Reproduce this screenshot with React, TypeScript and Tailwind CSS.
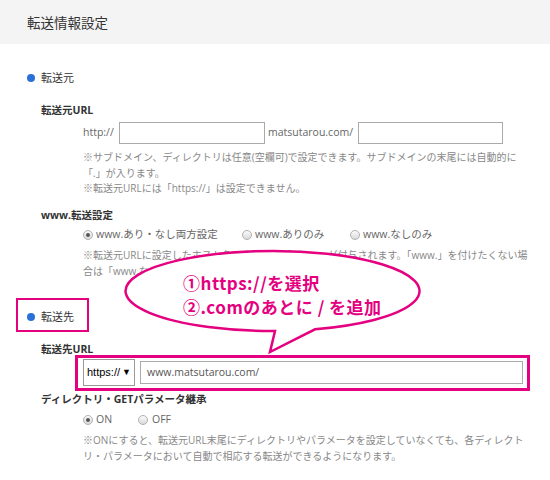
import React from 'react';

function Radio({ checked }: { checked?: boolean }) {
  return (
    <span className="inline-flex h-[10px] w-[10px] shrink-0 items-center justify-center rounded-full border border-[#b0b0b0] bg-linear-to-b from-[#fbfbfb] to-[#dadada]">
      {checked && <span className="h-[4px] w-[4px] rounded-full bg-[#555]" />}
    </span>
  );
}

function Dot() {
  return <span className="h-[8px] w-[8px] shrink-0 rounded-full bg-[#2b6fd9]" />;
}

export default function App() {
  return (
    <div className="relative h-[480px] w-[550px] overflow-hidden bg-white font-['Open_Sans','Noto_Sans_CJK_JP',sans-serif] text-[#333]">
      <div className="flex h-[44px] items-center bg-[#f4f4f4] pl-[27px] font-['Noto_Sans_CJK_JP',sans-serif] text-[13.5px]">
        転送情報設定
      </div>

      <div className="pl-[41px]">
        {/* 転送元 */}
        <div className="ml-[-14px] mt-[26px] flex h-[16px] items-center gap-[6px] text-[11px]">
          <Dot />
          転送元
        </div>

        <div className="mt-[16px] h-[16px] text-[10.5px] font-bold leading-[16px]">転送元URL</div>
        <div className="ml-[42px] mt-[4px] flex h-[22px] items-center text-[10.5px] text-[#666]">
          <span className="w-[36px]">http://</span>
          <span className="h-[22px] w-[146px] border border-[#aaa]" />
          <span className="ml-[3px] w-[90px]">matsutarou.com/</span>
          <span className="h-[22px] w-[145px] border border-[#aaa]" />
        </div>
        <div className="ml-[42px] mt-[6px] text-[10px] leading-[15.5px] text-[#888]">
          ※サブドメイン、ディレクトリは任意(空欄可)で設定できます。サブドメインの末尾には自動的に
          <br />
          「.」が入ります。
          <br />
          ※転送元URLには「https://」は設定できません。
        </div>

        <div className="mt-[10px] h-[16px] text-[10.5px] font-bold leading-[16px]">www.転送設定</div>
        <div className="ml-[42px] mt-[4px] flex h-[16px] items-center text-[10.5px] text-[#666]">
          <label className="flex w-[159px] items-center gap-[3px]">
            <Radio checked />
            www.あり・なし両方設定
          </label>
          <label className="flex w-[108px] items-center gap-[3px]">
            <Radio />
            www.ありのみ
          </label>
          <label className="flex items-center gap-[3px]">
            <Radio />
            www.なしのみ
          </label>
        </div>
        <div className="ml-[42px] mt-[4px] text-[10px] leading-[16px] text-[#888]">
          ※転送元URLに設定したホスト名に自動的に「www.」が付与されます。「www.」を付けたくない場
          <br />
          合は「www.なしのみ」を選択してください。
        </div>

        {/* 転送先 */}
        <div className="ml-[-25px] mt-[19px] flex h-[34px] w-[73px] items-center gap-[6px] border-2 border-[#e4007f] pl-[9px] pt-[5px] text-[11px]">
          <Dot />
          転送先
        </div>

        <div className="mt-[10px] h-[14px] text-[10.5px] font-bold leading-[14px]">転送先URL</div>
        <div className="ml-[34px] mt-[-1px] flex h-[36px] w-[455px] items-center gap-[5px] border-[3px] border-[#e4007f] pl-[5px] pr-[4px]">
          <div className="flex h-[27px] w-[52px] shrink-0 items-center justify-between border border-[#999] pl-[3px] pr-[3px] font-['Liberation_Sans',sans-serif] text-[11px] text-black">
            <span>https://</span>
            <span className="text-[9px]">▼</span>
          </div>
          <div className="flex h-[23px] flex-1 items-center border border-[#aaa] px-[6px] text-[10.5px] text-[#555]">
            www.matsutarou.com/
          </div>
        </div>

        <div className="h-[16px] text-[10.5px] font-bold leading-[16px]">ディレクトリ・GETパラメータ継承</div>
        <div className="ml-[42px] mt-[5px] flex h-[16px] items-center text-[10.5px] text-[#666]">
          <label className="flex w-[55px] items-center gap-[3px]">
            <Radio checked />
            ON
          </label>
          <label className="flex items-center gap-[4px]">
            <Radio />
            OFF
          </label>
        </div>
        <div className="ml-[42px] mt-[4px] text-[10px] leading-[16px] text-[#888]">
          ※ONにすると、転送元URL末尾にディレクトリやパラメータを設定していなくても、各ディレクト
          <br />
          リ・パラメータにおいて自動で相応する転送ができるようになります。
        </div>
      </div>

      {/* callout */}
      <svg className="pointer-events-none absolute left-0 top-0" width="550" height="480" viewBox="0 0 550 480">
        <path
          d="M 275 331 L 270 352 L 315 329.3 A 147 40 0 1 0 275 331 Z"
          fill="#fff"
          stroke="#e4007f"
          strokeWidth="2.5"
          strokeLinejoin="miter"
        />
      </svg>
      <div className="absolute left-[183px] top-[271px] font-['Noto_Sans_CJK_JP',sans-serif] text-[17px] font-bold leading-[24px] tracking-[0.5px] text-[#e4007f]">
        <div>①https://を選択</div>
        <div>②.comのあとに / を追加</div>
      </div>
    </div>
  );
}
